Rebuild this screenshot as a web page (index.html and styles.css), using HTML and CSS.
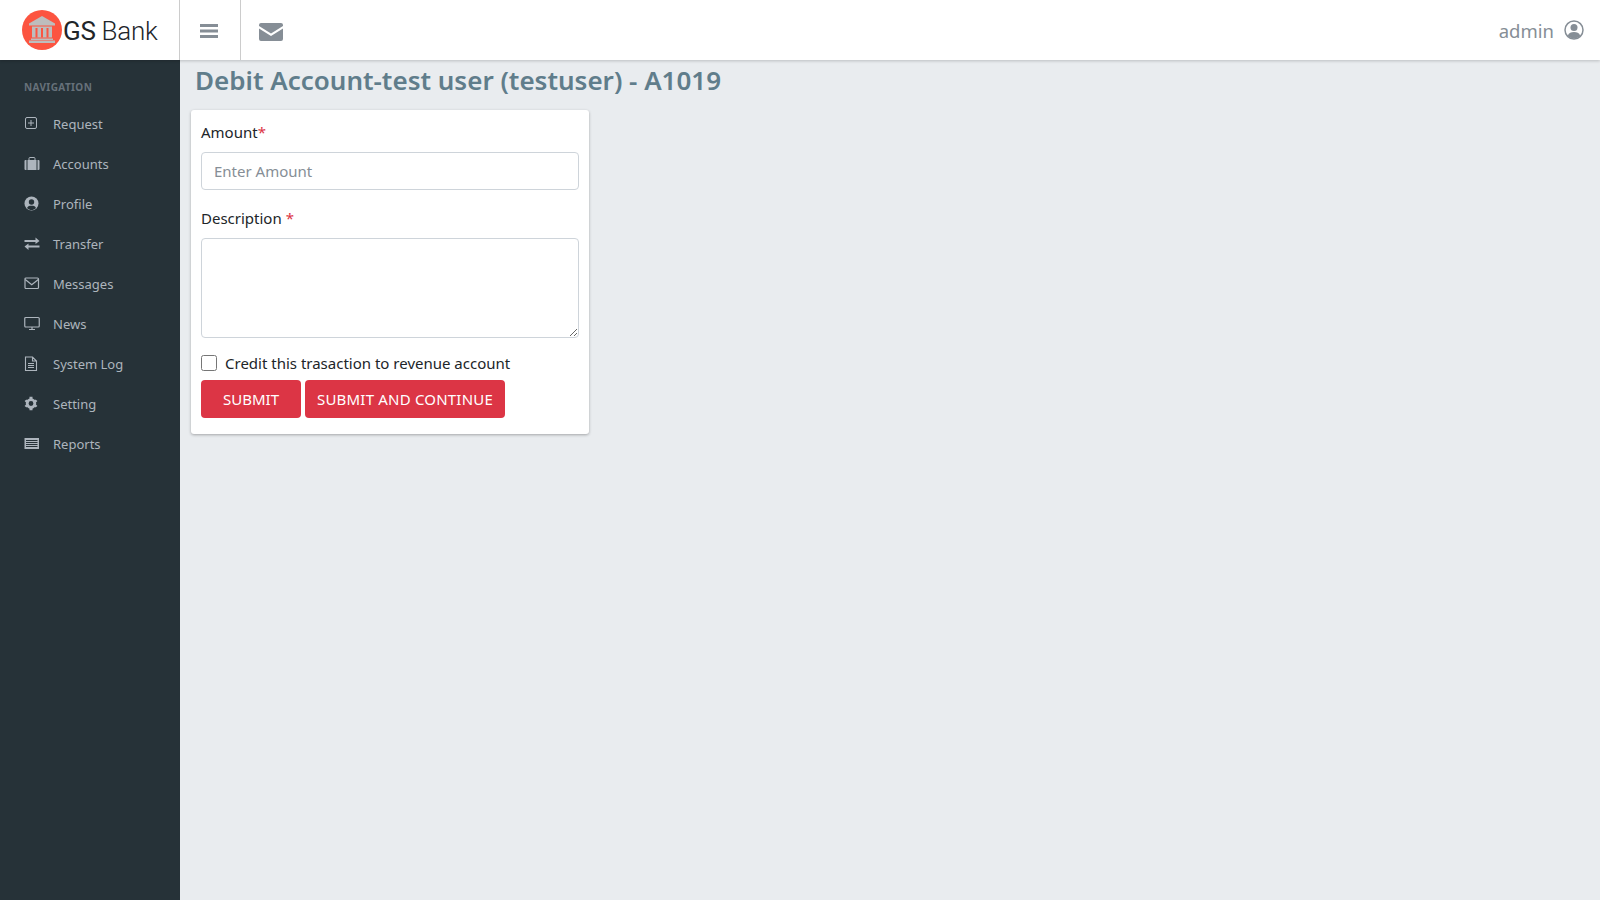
FILE: index.html
```html
<!doctype html>
<html>
<head>
<meta charset="UTF-8">
<title>Debit Account</title>
<link rel="stylesheet" href="styles.css">
</head>
<body>
<header class="topbar">
    <div class="brand">
        <svg class="brandLogo" viewBox="0 0 40 40">
            <circle cx="20" cy="20" r="20" fill="#fc5440"/>
            <path d="M20 6 L33 13.500 V15.500 H7 V13.500 Z" fill="#bdbdbd"/>
            <path d="M10 16.500 H30 V27.500 H10 Z" fill="#bdbdbd"/>
            <path d="M13.500 18 H15.500 V27.500 H13.500 Z M19 18 H21 V27.500 H19 Z M24.500 18 H26.500 V27.500 H24.500 Z" fill="#fc5440"/>
            <path d="M9 28.500 H31 V30 H9 Z M7 30.500 H33 V33 H7 Z" fill="#bdbdbd"/>
        </svg>
        <span class="brandName"><b>GS</b> Bank</span>
    </div>
    <div class="topBtn menuBtn">
        <svg width="18" height="16" viewBox="0 0 18 16"><path d="M0 1 H18 V4 H0 Z M0 6.500 H18 V9.500 H0 Z M0 12 H18 V15 H0 Z" fill="#868e96"/></svg>
    </div>
    <div class="topBtn mailBtn">
        <svg width="24" height="18" viewBox="0 0 24 18"><path d="M2 0 H22 A2 2 0 0 1 24 2 V3 L12 10.500 L0 3 V2 A2 2 0 0 1 2 0 Z M0 5.500 L12 13 L24 5.500 V16 A2 2 0 0 1 22 18 H2 A2 2 0 0 1 0 16 Z" fill="#868e96"/></svg>
    </div>
    <div class="userBox">
        <span>admin</span>
        <svg width="20" height="20" viewBox="0 0 20 20">
            <circle cx="10" cy="10" r="9" fill="none" stroke="#868e96" stroke-width="1.500"/>
            <circle cx="10" cy="7.500" r="3.500" fill="#868e96"/>
            <path d="M3.800 15.500 C5 12.500 7 12 10 12 C13 12 15 12.500 16.200 15.500 C14.500 17.800 12.500 18.500 10 18.500 C7.500 18.500 5.500 17.800 3.800 15.500 Z" fill="#868e96"/>
        </svg>
    </div>
</header>

<div class="wrap">
    <nav class="sidebar">
        <div class="navTitle">NAVIGATION</div>
        <a class="navItem">
            <svg class="navIcon" viewBox="0 0 16 16"><rect x="1.500" y="1.500" width="11" height="11" rx="1.500" fill="none" stroke="#adb5bd"/><path d="M7 4 V10 M4 7 H10" stroke="#adb5bd"/></svg>
            Request
        </a>
        <a class="navItem">
            <svg class="navIcon" viewBox="0 0 16 16"><path d="M5 4 V2.500 A1 1 0 0 1 6 1.500 H10 A1 1 0 0 1 11 2.500 V4" fill="none" stroke="#adb5bd"/><path d="M1.500 4 H2.500 V14 H1.500 A1 1 0 0 1 .5 13 V5 A1 1 0 0 1 1.500 4 Z M3.500 4 H12.500 V14 H3.500 Z M13.500 4 H14.500 A1 1 0 0 1 15.500 5 V13 A1 1 0 0 1 14.500 14 H13.500 Z" fill="#adb5bd"/></svg>
            Accounts
        </a>
        <a class="navItem">
            <svg class="navIcon" viewBox="0 0 16 16"><circle cx="7.500" cy="7.500" r="7" fill="#adb5bd"/><circle cx="7.500" cy="6" r="2.700" fill="#263238"/><path d="M3 12 C4 10 5.500 9.800 7.500 9.800 C9.500 9.800 11 10 12 12 C10.500 13.500 9 14 7.500 14 C6 14 4.500 13.500 3 12 Z" fill="#263238"/></svg>
            Profile
        </a>
        <a class="navItem">
            <svg class="navIcon" viewBox="0 0 16 16"><path d="M.5 4 H11.500 V1.500 L15.500 5 L11.500 8 V6 H.5 Z M15.500 9.500 H4.500 V7.500 L.5 10.500 L4.500 14 V11.500 H15.500 Z" fill="#adb5bd"/></svg>
            Transfer
        </a>
        <a class="navItem">
            <svg class="navIcon" viewBox="0 0 16 16"><rect x="1" y="2" width="13.500" height="10.500" rx="1" fill="none" stroke="#adb5bd" stroke-width="1.200"/><path d="M1.200 3.500 L7.750 8.800 L14.300 3.500" fill="none" stroke="#adb5bd" stroke-width="1.200"/></svg>
            Messages
        </a>
        <a class="navItem">
            <svg class="navIcon" viewBox="0 0 16 16"><rect x=".75" y="1.500" width="14.500" height="9.500" rx="1" fill="none" stroke="#adb5bd" stroke-width="1.200"/><path d="M8 11 V13 M5 13.500 H11" stroke="#adb5bd" stroke-width="1.200"/></svg>
            News
        </a>
        <a class="navItem">
            <svg class="navIcon" viewBox="0 0 16 16"><path d="M1.500 1 H8.500 L12.500 5 V14.500 H1.500 Z M8.500 1 V5 H12.500 M4 7.500 H10 M4 9.500 H10 M4 11.500 H10" fill="none" stroke="#adb5bd" stroke-width="1.100"/></svg>
            System Log
        </a>
        <a class="navItem">
            <svg class="navIcon" viewBox="0 0 16 16"><circle cx="7" cy="7.500" r="3.800" fill="none" stroke="#adb5bd" stroke-width="2.800"/><path d="M5.500 .8 H8.500 V3 H5.500 Z M5.500 12 H8.500 V14.200 H5.500 Z M.6 5 L2.500 3.500 L3.800 5 L2 6.500 Z M13.400 5 L11.500 3.500 L10.200 5 L12 6.500 Z M.6 10 L2.500 11.500 L3.800 10 L2 8.500 Z M13.400 10 L11.500 11.500 L10.200 10 L12 8.500 Z" fill="#adb5bd"/></svg>
            Setting
        </a>
        <a class="navItem">
            <svg class="navIcon" viewBox="0 0 16 16"><path d="M.5 2 H15 V13 H.5 Z" fill="#adb5bd"/><path d="M2 4.500 H13.500 M2 6.500 H13.500 M2 8.500 H13.500 M2 10.500 H13.500" stroke="#263238"/></svg>
            Reports
        </a>
    </nav>

    <main class="content">
        <h1 class="pageTitle">Debit Account-test user (testuser) - A1019</h1>
        <form class="card">
            <label class="fieldLabel">Amount<span class="req">*</span></label>
            <input class="control amountInput" type="text" placeholder="Enter Amount">
            <label class="fieldLabel descLabel">Description <span class="req">*</span></label>
            <textarea class="control descInput"></textarea>
            <label class="checkRow"><input type="checkbox" class="check"><span>Credit this trasaction to revenue account</span></label>
            <div class="btnRow">
                <button type="button" class="btnRed btnSubmit">SUBMIT</button>
                <button type="button" class="btnRed btnContinue">SUBMIT AND CONTINUE</button>
            </div>
        </form>
    </main>
</div>
</body>
</html>
```

FILE: styles.css
```css
* {
    box-sizing: border-box;
}

html, body {
    height: 100%;
}

body {
    margin: 0;
    background-color: #e9ecef;
    color: #212529;
    font-family: "Noto Sans", "Open Sans", sans-serif;
    font-size: 15px;
    overflow: hidden;
}

.topbar {
    display: flex;
    align-items: stretch;
    height: 60px;
    background-color: #fff;
    box-shadow: 0 1px 3px rgba(0, 0, 0, 0.2);
    position: relative;
}

.brand {
    display: flex;
    align-items: center;
    width: 180px;
    padding-left: 22px;
    border-right: 1px solid #ccc;
}

.brandLogo {
    width: 40px;
    height: 40px;
}

.brandName {
    font-family: Roboto, sans-serif;
    font-weight: 300;
    font-size: 26px;
    letter-spacing: -0.3px;
    color: #212529;
    margin-left: 1px;
    padding-top: 2px;
}

.brandName b {
    font-weight: 400;
}

.topBtn {
    display: flex;
    align-items: center;
    justify-content: center;
}

.menuBtn {
    width: 61px;
    padding-top: 2px;
    padding-right: 2px;
    border-right: 1px solid #ccc;
}

.mailBtn {
    width: 59px;
    padding-top: 4px;
}

.userBox {
    margin-left: auto;
    display: flex;
    align-items: center;
    gap: 10px;
    padding-right: 16px;
    color: #868e96;
    font-size: 18.500px;
}

.wrap {
    display: flex;
    height: 840px;
}

.sidebar {
    width: 180px;
    background-color: #263238;
    padding-top: 21px;
    flex-shrink: 0;
}

.navTitle {
    padding-left: 24px;
    font-size: 10px;
    font-weight: 700;
    letter-spacing: 0.4px;
    color: #66717a;
    line-height: 12px;
    margin-bottom: 11px;
}

.navItem {
    display: flex;
    align-items: center;
    height: 40px;
    padding-left: 24px;
    color: #adb5bd;
    font-size: 13px;
}

.navIcon {
    width: 16px;
    height: 16px;
    margin-right: 13px;
    margin-top: -1px;
}

.content {
    flex: 1;
    padding: 1px 11px;
}

.pageTitle {
    margin: 0 0 11px 4px;
    color: #607d8b;
    font-size: 26px;
    font-weight: 600;
    line-height: 38px;
}

.card {
    width: 398px;
    height: 324px;
    background-color: #fff;
    border-radius: 3px;
    padding: 11px 10px 10px;
    box-shadow: 0 1px 3px rgba(0, 0, 0, 0.3);
}

.fieldLabel {
    display: block;
    line-height: 22px;
    margin-bottom: 9px;
}

.descLabel {
    margin-top: 17px;
}

.req {
    color: #dc3545;
}

.control {
    display: block;
    width: 100%;
    background-color: #fff;
    border: 1px solid #ced4da;
    border-radius: 4px;
    font-family: inherit;
    font-size: 15px;
    color: #495057;
    padding: 6px 12px;
}

.control::placeholder {
    color: #868e96;
}

.amountInput {
    height: 38px;
}

.descInput {
    height: 100px;
}

.checkRow {
    display: flex;
    align-items: center;
    margin-top: 14px;
    line-height: 22px;
}

.check {
    width: 16px;
    height: 16px;
    margin: 0 8px 0 0;
}

.btnRow {
    display: flex;
    gap: 4px;
    margin-top: 6px;
}

.btnRed {
    height: 38px;
    background-color: #dc3545;
    color: #fff;
    border: 0;
    border-radius: 4px;
    font-family: inherit;
    font-size: 15px;
    padding: 0;
}

.btnSubmit {
    width: 100px;
}

.btnContinue {
    width: 200px;
    letter-spacing: 0.2px;
}
```
